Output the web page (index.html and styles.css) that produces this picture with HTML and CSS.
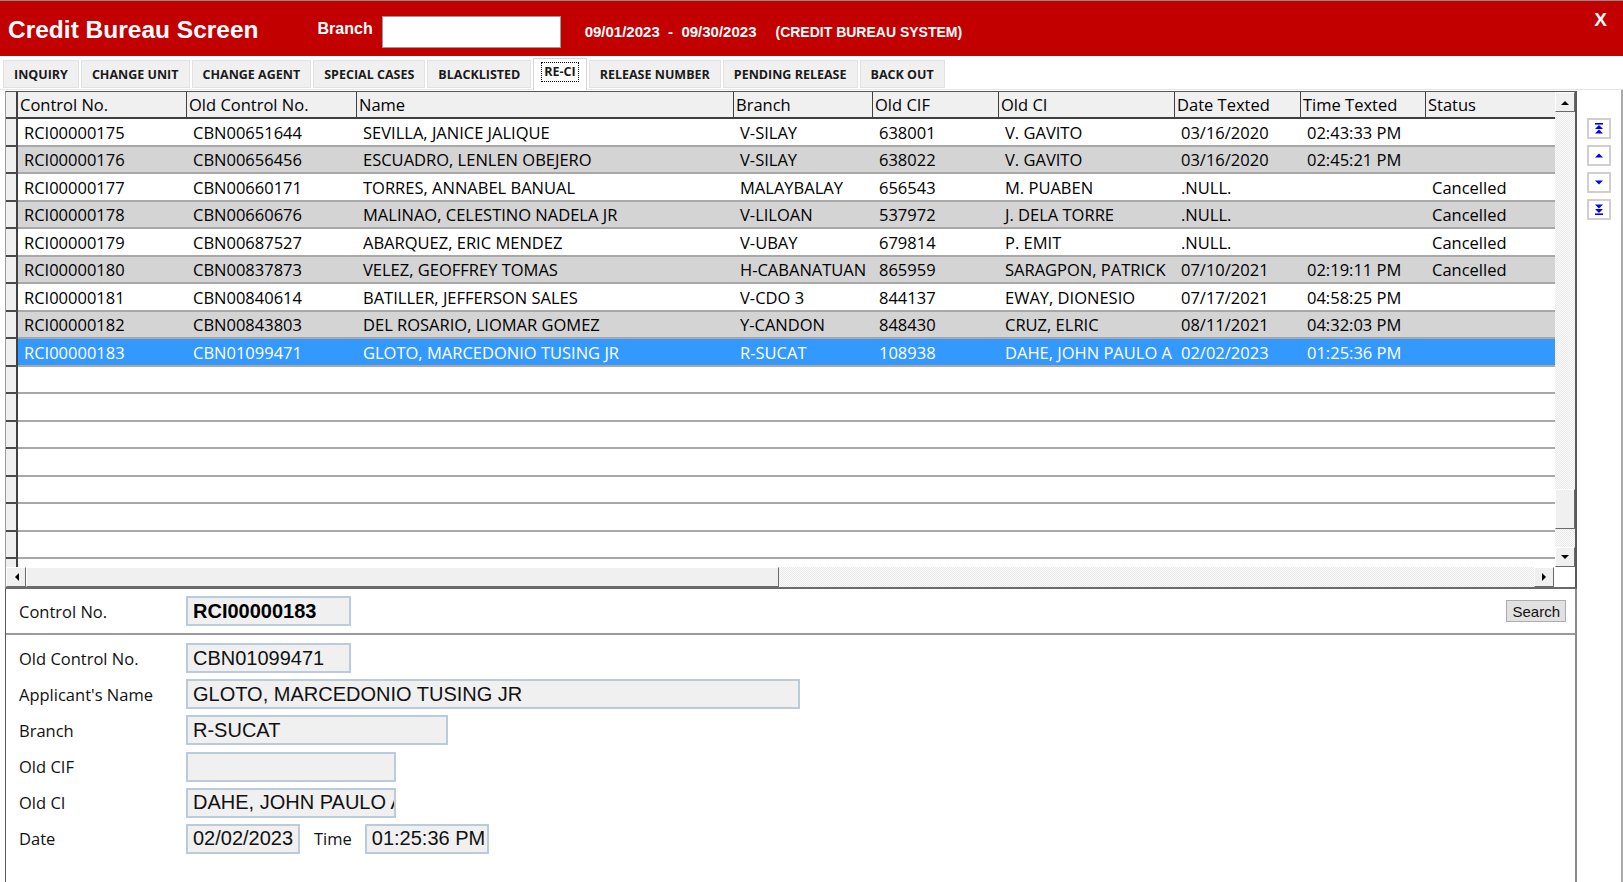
FILE: index.html
```html
<!DOCTYPE html>
<html>
<head>
<meta charset="utf-8">
<title>Credit Bureau Screen</title>
<link rel="stylesheet" href="styles.css">
</head>
<body>
<div class="window">
  <header class="titlebar">
    <span class="title">Credit Bureau Screen</span>
    <span class="branch-label">Branch</span>
    <span class="branch-input"></span>
    <span class="period">09/01/2023&nbsp; - &nbsp;09/30/2023</span>
    <span class="system">(CREDIT BUREAU SYSTEM)</span>
    <span class="close">X</span>
  </header>

  <nav class="tabbar">
    <div class="tab">INQUIRY</div>
    <div class="tab">CHANGE UNIT</div>
    <div class="tab">CHANGE AGENT</div>
    <div class="tab">SPECIAL CASES</div>
    <div class="tab">BLACKLISTED</div>
    <div class="tab active"><span>RE-CI</span></div>
    <div class="tab">RELEASE NUMBER</div>
    <div class="tab">PENDING RELEASE</div>
    <div class="tab">BACK OUT</div>
  </nav>

  <div class="body">
    <div class="main">
      <div class="grid">
        <div class="grid-top">
          <div class="table">
            <div class="row head">
              <div class="ind"></div>
              <div class="hc">Control No.</div>
              <div class="hc">Old Control No.</div>
              <div class="hc">Name</div>
              <div class="hc">Branch</div>
              <div class="hc">Old CIF</div>
              <div class="hc">Old CI</div>
              <div class="hc">Date Texted</div>
              <div class="hc">Time Texted</div>
              <div class="hc">Status</div>
            </div>
            <div class="row">
              <div class="ind"></div><div class="c">RCI00000175</div><div class="c">CBN00651644</div><div class="c">SEVILLA, JANICE JALIQUE</div><div class="c">V-SILAY</div><div class="c">638001</div><div class="c">V. GAVITO</div><div class="c">03/16/2020</div><div class="c">02:43:33 PM</div><div class="c"></div>
            </div>
            <div class="row alt">
              <div class="ind"></div><div class="c">RCI00000176</div><div class="c">CBN00656456</div><div class="c">ESCUADRO, LENLEN OBEJERO</div><div class="c">V-SILAY</div><div class="c">638022</div><div class="c">V. GAVITO</div><div class="c">03/16/2020</div><div class="c">02:45:21 PM</div><div class="c"></div>
            </div>
            <div class="row">
              <div class="ind"></div><div class="c">RCI00000177</div><div class="c">CBN00660171</div><div class="c">TORRES, ANNABEL BANUAL</div><div class="c">MALAYBALAY</div><div class="c">656543</div><div class="c">M. PUABEN</div><div class="c">.NULL.</div><div class="c"></div><div class="c">Cancelled</div>
            </div>
            <div class="row alt">
              <div class="ind"></div><div class="c">RCI00000178</div><div class="c">CBN00660676</div><div class="c">MALINAO, CELESTINO NADELA JR</div><div class="c">V-LILOAN</div><div class="c">537972</div><div class="c">J. DELA TORRE</div><div class="c">.NULL.</div><div class="c"></div><div class="c">Cancelled</div>
            </div>
            <div class="row">
              <div class="ind"></div><div class="c">RCI00000179</div><div class="c">CBN00687527</div><div class="c">ABARQUEZ, ERIC MENDEZ</div><div class="c">V-UBAY</div><div class="c">679814</div><div class="c">P. EMIT</div><div class="c">.NULL.</div><div class="c"></div><div class="c">Cancelled</div>
            </div>
            <div class="row alt">
              <div class="ind"></div><div class="c">RCI00000180</div><div class="c">CBN00837873</div><div class="c">VELEZ, GEOFFREY TOMAS</div><div class="c">H-CABANATUAN</div><div class="c">865959</div><div class="c">SARAGPON, PATRICK</div><div class="c">07/10/2021</div><div class="c">02:19:11 PM</div><div class="c">Cancelled</div>
            </div>
            <div class="row">
              <div class="ind"></div><div class="c">RCI00000181</div><div class="c">CBN00840614</div><div class="c">BATILLER, JEFFERSON SALES</div><div class="c">V-CDO 3</div><div class="c">844137</div><div class="c">EWAY, DIONESIO</div><div class="c">07/17/2021</div><div class="c">04:58:25 PM</div><div class="c"></div>
            </div>
            <div class="row alt">
              <div class="ind"></div><div class="c">RCI00000182</div><div class="c">CBN00843803</div><div class="c">DEL ROSARIO, LIOMAR GOMEZ</div><div class="c">Y-CANDON</div><div class="c">848430</div><div class="c">CRUZ, ELRIC</div><div class="c">08/11/2021</div><div class="c">04:32:03 PM</div><div class="c"></div>
            </div>
            <div class="row sel">
              <div class="ind"></div><div class="c">RCI00000183</div><div class="c">CBN01099471</div><div class="c">GLOTO, MARCEDONIO TUSING JR</div><div class="c">R-SUCAT</div><div class="c">108938</div><div class="c">DAHE, JOHN PAULO A</div><div class="c">02/02/2023</div><div class="c">01:25:36 PM</div><div class="c"></div>
            </div>
            <div class="row empty"><div class="ind"></div><div class="fill"></div></div>
            <div class="row empty"><div class="ind"></div><div class="fill"></div></div>
            <div class="row empty"><div class="ind"></div><div class="fill"></div></div>
            <div class="row empty"><div class="ind"></div><div class="fill"></div></div>
            <div class="row empty"><div class="ind"></div><div class="fill"></div></div>
            <div class="row empty"><div class="ind"></div><div class="fill"></div></div>
            <div class="row empty"><div class="ind"></div><div class="fill"></div></div>
            <div class="row empty"><div class="ind"></div><div class="fill"></div></div>
          </div>
          <div class="vscroll">
            <div class="sbtn"><svg width="8" height="5" viewBox="0 0 8 5"><polygon points="0,5 4,1 8,5" fill="#000"/></svg></div>
            <div class="track"></div>
            <div class="vthumb"></div>
            <div class="vgap"></div>
            <div class="sbtn"><svg width="8" height="5" viewBox="0 0 8 5"><polygon points="0,0 4,4 8,0" fill="#000"/></svg></div>
          </div>
        </div>
        <div class="hscroll">
          <div class="sbtn"><svg width="5" height="8" viewBox="0 0 5 8"><polygon points="5,0 1,4 5,8" fill="#000"/></svg></div>
          <div class="hthumb"></div>
          <div class="track"></div>
          <div class="sbtn"><svg width="5" height="8" viewBox="0 0 5 8"><polygon points="0,0 4,4 0,8" fill="#000"/></svg></div>
          <div class="corner"></div>
        </div>
      </div>

      <section class="form">
        <div class="ctrl-row">
          <span class="label">Control No.</span>
          <span class="input bold w-ctrl">RCI00000183</span>
          <button class="search">Search</button>
        </div>
        <div class="fields">
          <div class="field"><span class="label">Old Control No.</span><span class="input w-ctrl">CBN01099471</span></div>
          <div class="field"><span class="label">Applicant's Name</span><span class="input w-name">GLOTO, MARCEDONIO TUSING JR</span></div>
          <div class="field"><span class="label">Branch</span><span class="input w-branch">R-SUCAT</span></div>
          <div class="field"><span class="label">Old CIF</span><span class="input w-ci"></span></div>
          <div class="field"><span class="label">Old CI</span><span class="input w-ci">DAHE, JOHN PAULO A</span></div>
          <div class="field"><span class="label">Date</span><span class="input w-date">02/02/2023</span><span class="time-label">Time</span><span class="input w-time">01:25:36 PM</span></div>
        </div>
      </section>
    </div>

    <aside class="side">
      <div class="nav"><svg width="12" height="13" viewBox="0 0 12 13"><rect x="2" y="1" width="8" height="1.6" fill="#0000ff"/><polygon points="2,7 6,3 10,7" fill="#0000ff"/><polygon points="2,11.5 6,7.5 10,11.5" fill="#0000ff"/></svg></div>
      <div class="nav"><svg width="12" height="13" viewBox="0 0 12 13"><polygon points="2,8.5 6,4.5 10,8.5" fill="#0000ff"/></svg></div>
      <div class="nav"><svg width="12" height="13" viewBox="0 0 12 13"><polygon points="2,4.5 6,8.5 10,4.5" fill="#0000ff"/></svg></div>
      <div class="nav"><svg width="12" height="13" viewBox="0 0 12 13"><polygon points="2,1.5 6,5.5 10,1.5" fill="#0000ff"/><polygon points="2,6 6,10 10,6" fill="#0000ff"/><rect x="2" y="10.4" width="8" height="1.6" fill="#0000ff"/></svg></div>
    </aside>
  </div>
</div>
</body>
</html>
```

FILE: styles.css
```css
* { box-sizing: border-box; }

body {
  margin: 0;
  background: #fff;
  font-family: "Open Sans", "Noto Sans", sans-serif;
}

.window {
  width: 1623px;
  height: 882px;
  border-top: 1px solid #8a8a8a;
  overflow: hidden;
  display: flex;
  flex-direction: column;
}

/* ---------- title bar ---------- */
.titlebar {
  height: 55px;
  flex: none;
  background: #c30000;
  display: flex;
  align-items: center;
  padding-left: 8px;
  color: #fff;
  font-family: "Liberation Sans", Arial, sans-serif;
  font-weight: bold;
}
.title { font-size: 24.5px; margin-right: 59px; margin-top: 3px; }
.branch-label { font-size: 16px; margin-right: 9px; margin-top: 1px; }
.branch-input {
  width: 179px;
  height: 32px;
  margin-top: 7px;
  background: #fff;
  border: 1px solid #9a9a9a;
}
.period { font-size: 15px; margin-left: 24px; margin-top: 6px; }
.system { font-size: 14px; margin-left: 19px; margin-top: 6px; }
.close {
  margin-left: auto;
  margin-right: 16px;
  align-self: flex-start;
  margin-top: 8px;
  font-size: 19px;
}

/* ---------- tabs ---------- */
.tabbar {
  height: 34px;
  flex: none;
  display: flex;
  align-items: flex-end;
  gap: 2px;
  padding-left: 3px;
  padding-bottom: 1px;
  border-bottom: 1px solid #e4e4e4;
}
.tab {
  height: 28px;
  padding: 0 10px;
  background: #f0f0f0;
  border: 1px solid #e2e2e2;
  font-family: "Open Sans", sans-serif;
  font-weight: 700;
  font-size: 12.5px;
  color: #1a1a1a;
  display: flex;
  align-items: center;
}
.tab.active {
  background: #fff;
  height: 32px;
  margin-bottom: -2px;
  border-color: #d6d6d6;
  border-bottom: none;
  padding: 0 8px;
  align-items: flex-start;
  padding-top: 4px;
}
.tab.active span {
  outline: 1px dotted #000;
  padding: 0 2px;
  line-height: 18px;
}

/* ---------- body ---------- */
.body {
  flex: 1;
  min-height: 0;
  display: flex;
  border-right: 2px solid #a9a9a9;
}
.main {
  width: 1577px;
  flex: none;
  padding-left: 5px;
  padding-top: 1px;
  display: flex;
  flex-direction: column;
}

/* ---------- grid ---------- */
.grid {
  height: 498px;
  flex: none;
  border-top: 1px solid #555;
  border-left: 1px solid #9c9c9c;
  border-right: 2px solid #5a5a5a;
  border-bottom: 2px solid #6a6a6a;
  display: flex;
  flex-direction: column;
}
.grid-top {
  flex: 1;
  min-height: 0;
  display: flex;
}
.table {
  flex: 1;
  overflow: hidden;
  background: #fff;
}
.row {
  display: grid;
  grid-template-columns: 12px 169px 170px 377px 139px 126px 176px 126px 125px 129px;
  height: 27.5px;
  font-size: 16.5px;
  color: #000;
}
.row.head { height: 27px; }
.ind {
  background: #f0f0f0;
  border-right: 2px solid #404040;
  border-bottom: 2px solid #4a4a4a;
}
.hc {
  background: #f0f0f0;
  border-right: 1px solid #404040;
  border-bottom: 2px solid #404040;
  padding-left: 2px;
  display: flex;
  align-items: center;
  white-space: nowrap;
  overflow: hidden;
}
.hc:last-child { border-right: none; }
.c {
  border-bottom: 2px solid #a8a8a8;
  padding-left: 6px;
  padding-top: 1px;
  display: flex;
  align-items: center;
  white-space: nowrap;
  overflow: hidden;
}
.row.alt .c { background: #d4d4d4; }
.row.sel .c { background: #3399ff; color: #fff; }
.fill {
  grid-column: 2 / -1;
  border-bottom: 2px solid #a8a8a8;
}

/* ---------- scrollbars ---------- */
.sbtn {
  width: 20px;
  height: 20px;
  flex: none;
  background: #f0f0f0;
  border: 1px solid;
  border-color: #fff #6a6a6a #6a6a6a #fff;
  display: flex;
  align-items: center;
  justify-content: center;
}
.track {
  flex: 1;
  background-color: #f4f4f4;
  background-image: repeating-conic-gradient(#fbfbfb 0 25%, #e9e9e9 0 50%);
  background-size: 2px 2px;
}
.vscroll {
  width: 20px;
  flex: none;
  display: flex;
  flex-direction: column;
}
.vthumb {
  height: 40px;
  flex: none;
  background: #f0f0f0;
  border: 1px solid;
  border-color: #fff #6a6a6a #6a6a6a #fff;
}
.vgap {
  height: 18px;
  flex: none;
  background-color: #f4f4f4;
  background-image: repeating-conic-gradient(#fbfbfb 0 25%, #e9e9e9 0 50%);
  background-size: 2px 2px;
}
.hscroll {
  height: 20px;
  flex: none;
  display: flex;
}
.hthumb {
  width: 753px;
  flex: none;
  background: #f0f0f0;
  border: 1px solid;
  border-color: #fff #6a6a6a #6a6a6a #fff;
}
.corner {
  width: 21px;
  flex: none;
  background: #fff;
}

/* ---------- form ---------- */
.form {
  flex: 1;
  border-left: 1px solid #5a5a5a;
  border-right: 2px solid #8a8a8a;
  display: flex;
  flex-direction: column;
}
.ctrl-row {
  height: 46px;
  flex: none;
  display: flex;
  align-items: center;
  padding: 0 9px 0 13px;
  border-bottom: 2px solid #9a9a9a;
}
.label {
  width: 167px;
  flex: none;
  font-size: 16.5px;
  color: #111;
}
.input {
  height: 30px;
  flex: none;
  background: #f0f0f0;
  border: 2px solid #bccbdc;
  font-family: "Liberation Sans", Arial, sans-serif;
  font-size: 20px;
  color: #111;
  padding-left: 5px;
  display: flex;
  align-items: center;
  white-space: nowrap;
  overflow: hidden;
}
.input.bold { font-weight: bold; color: #000; }
.w-ctrl { width: 165px; }
.w-name { width: 614px; }
.w-branch { width: 262px; }
.w-ci { width: 210px; }
.w-date { width: 114px; }
.w-time { width: 124px; }
.time-label {
  font-size: 16.5px;
  color: #111;
  margin: 0 13px 0 14px;
}
.search {
  margin-left: auto;
  height: 22px;
  padding: 0 5px;
  border: 1px solid #adadad;
  background: #e1e1e1;
  font-family: "Liberation Sans", Arial, sans-serif;
  font-size: 15px;
  color: #111;
}
.fields {
  padding: 8px 0 0 13px;
  display: flex;
  flex-direction: column;
  gap: 6.2px;
}
.field {
  display: flex;
  align-items: center;
  height: 30px;
}

/* ---------- side nav ---------- */
.side {
  flex: 1;
  display: flex;
  flex-direction: column;
  align-items: flex-start;
  padding: 28px 0 0 10px;
  gap: 6px;
}
.nav {
  width: 24px;
  height: 21px;
  background: #fff;
  border: 2px solid #cfcfcf;
  display: flex;
  align-items: center;
  justify-content: center;
}
```
